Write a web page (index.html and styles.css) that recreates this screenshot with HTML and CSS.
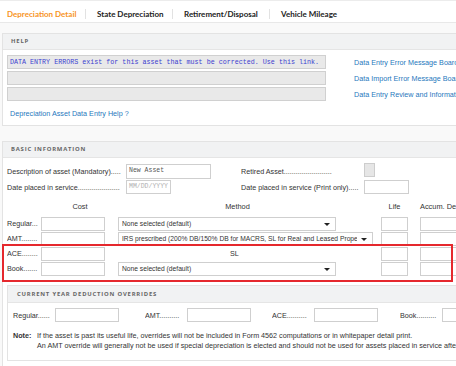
FILE: index.html
```html
<!DOCTYPE html>
<html>
<head>
<meta charset="utf-8">
<link rel="stylesheet" href="styles.css">
</head>
<body>
<nav class="tabs">
  <span class="tab t1 active">Depreciation Detail</span>
  <span class="sep"></span>
  <span class="tab t2">State Depreciation</span>
  <span class="sep"></span>
  <span class="tab t3">Retirement/Disposal</span>
  <span class="sep"></span>
  <span class="tab t4">Vehicle Mileage</span>
</nav>
<main class="page">
  <section class="panel help">
    <div class="panel-head">HELP</div>
    <div class="help-body">
      <div class="help-boxes">
        <div class="hbox err">DATA ENTRY ERRORS exist for this asset that must be corrected. Use this link.</div>
        <div class="hbox"></div>
        <div class="hbox"></div>
      </div>
      <div class="help-links">
        <a class="link">Data Entry Error Message Board</a>
        <a class="link">Data Import Error Message Board</a>
        <a class="link">Data Entry Review and Information</a>
      </div>
    </div>
    <a class="link help-main">Depreciation Asset Data Entry Help ?</a>
  </section>

  <section class="panel basic">
    <div class="panel-head">BASIC INFORMATION</div>
    <div class="basic-body">
      <div class="info-grid">
        <span class="lbl">Description of asset (Mandatory).....</span>
        <span class="cell"><span class="inp mono w-desc">New Asset</span></span>
        <span class="lbl">Retired Asset........................</span>
        <span class="cell"><span class="chk"></span></span>
        <span class="lbl">Date placed in service.....................</span>
        <span class="cell"><span class="inp mono ph w-date">MM/DD/YYYY</span></span>
        <span class="lbl">Date placed in service (Print only).....</span>
        <span class="cell"><span class="inp w-date"></span></span>
      </div>

      <div class="dep-grid">
        <span></span>
        <span class="th th-cost">Cost</span>
        <span></span>
        <span class="th th-method">Method</span>
        <span></span>
        <span class="th">Life</span>
        <span></span>
        <span class="th th-left">Accum. Depr.</span>

        <span class="lbl">Regular...</span>
        <span class="inp"></span>
        <span></span>
        <span class="sel w-sel"><span class="sel-t">None selected (default)</span><i class="arr"></i></span>
        <span></span>
        <span class="inp"></span>
        <span></span>
        <span class="inp"></span>

        <span class="lbl">AMT........</span>
        <span class="inp"></span>
        <span></span>
        <span class="sel w-sel-wide"><span class="sel-t">IRS prescribed (200% DB/150% DB for MACRS, SL for Real and Leased Property)</span><i class="arr"></i></span>
        <span></span>
        <span class="inp"></span>
        <span></span>
        <span class="inp"></span>

        <span class="lbl">ACE........</span>
        <span class="inp"></span>
        <span></span>
        <span class="plain">SL</span>
        <span></span>
        <span class="inp"></span>
        <span></span>
        <span class="inp"></span>

        <span class="lbl">Book.......</span>
        <span class="inp"></span>
        <span></span>
        <span class="sel w-sel"><span class="sel-t">None selected (default)</span><i class="arr"></i></span>
        <span></span>
        <span class="inp"></span>
        <span></span>
        <span class="inp"></span>
      </div>

      <section class="panel cyd">
        <div class="panel-head">CURRENT YEAR DEDUCTION OVERRIDES</div>
        <div class="cyd-body">
          <div class="cyd-row">
            <span class="cyd-item"><span class="lbl">Regular......</span><span class="inp"></span></span>
            <span class="cyd-item"><span class="lbl">AMT..........</span><span class="inp"></span></span>
            <span class="cyd-item"><span class="lbl">ACE..........</span><span class="inp"></span></span>
            <span class="cyd-item"><span class="lbl">Book..........</span><span class="inp"></span></span>
          </div>
          <div class="note">
            <b class="note-k">Note:</b>
            <div class="note-t">
              <div>If the asset is past its useful life, overrides will not be included in Form 4562 computations or in whitepaper detail print.</div>
              <div>An AMT override will generally not be used if special depreciation is elected and should not be used for assets placed in service after 1998.</div>
            </div>
          </div>
        </div>
      </section>
    </div>
    <div class="highlight"></div>
  </section>
</main>
</body>
</html>
```

FILE: styles.css
```css
* { box-sizing: border-box; }
html, body { margin: 0; padding: 0; }
body {
  width: 456px;
  height: 366px;
  overflow: hidden;
  background: #ffffff;
  font-family: "Liberation Sans", Arial, sans-serif;
  font-size: 7.2px;
  color: #333;
}

/* tabs */
.tabs {
  display: flex;
  align-items: center;
  height: 23px;
  padding: 4px 0 0 7px;
  border-top: 1px solid #ececec;
  border-bottom: 1px solid #e8e8e8;
  font-family: Lato, "Liberation Sans", sans-serif;
  font-weight: 700;
  font-size: 8px;
  color: #222;
  white-space: nowrap;
}
.tab { flex: none; }
.t1 { width: 68px; }
.t2 { width: 65px; }
.t3 { width: 75px; }
.t4 { width: 56px; }
.tab.active { color: #f7941e; }
.sep {
  flex: none;
  width: 1px;
  height: 10px;
  background: #e2e2e2;
  margin: 0 11px 0 10px;
}

/* page */
.page {
  padding: 10px 0 0 2px;
  background: #f9f9f9;
}
.panel {
  background: #fff;
  border: 1px solid #e3e3e3;
  border-right: none;
}
.panel-head {
  height: 16px;
  line-height: 15px;
  padding-left: 8px;
  background: #f1f2f3;
  border-bottom: 1px solid #e5e5e5;
  font-family: "Open Sans", "Liberation Sans", sans-serif;
  font-weight: 700;
  font-size: 5.9px;
  letter-spacing: 0.8px;
  color: #666;
}

/* help */
.help { height: 93px; }
.help-body {
  display: flex;
  padding: 5px 0 0 4px;
}
.help-boxes {
  display: flex;
  flex-direction: column;
  flex: none;
  gap: 2px;
  width: 319px;
}
.hbox {
  height: 14px;
  background: #e9e9e9;
  border: 1px solid #d0d0d0;
}
.hbox.err {
  padding-left: 2px;
  line-height: 12px;
  font-family: "Liberation Mono", monospace;
  font-size: 6.7px;
  color: #3c3fd0;
  white-space: nowrap;
  overflow: hidden;
}
.help-links {
  display: flex;
  flex-direction: column;
  flex: none;
  margin-left: 28px;
  white-space: nowrap;
}
.link {
  color: #1f78bd;
  line-height: 16px;
}
.help-main {
  display: block;
  margin: 5px 0 0 7px;
  line-height: 12px;
}

/* basic */
.basic {
  position: relative;
  margin-top: 15px;
  height: 240px;
}
.basic-body { padding: 5px 0 0 4px; }
.info-grid {
  display: grid;
  grid-template-columns: 119px 115px 123px 1fr;
  grid-auto-rows: 16px;
  align-items: center;
}
.info-grid .lbl { overflow: hidden; white-space: nowrap; }
.cell { display: flex; align-items: center; }
.inp {
  display: block;
  height: 14px;
  background: #fff;
  border: 1px solid #cfcfcf;
}
.mono {
  padding-left: 2px;
  line-height: 12px;
  font-family: "Liberation Mono", monospace;
  font-size: 6.5px;
  color: #555;
  white-space: nowrap;
  overflow: hidden;
}
.ph { color: #b0b0b0; font-size: 6.5px; }
.w-desc { width: 85px; height: 15px; }
.w-date { width: 45px; }
.chk {
  display: block;
  width: 11px;
  height: 14px;
  background: #e6e6e6;
  border: 1px solid #cdcdcd;
  margin-top: -2px;
}

.dep-grid {
  display: grid;
  grid-template-columns: 34px 64px 13px 255px 8px 27px 12px 60px;
  grid-template-rows: 20px repeat(4, 15px);
  align-items: center;
  margin-top: 1px;
  white-space: nowrap;
}
.dep-grid .lbl { overflow: hidden; }
.th { text-align: center; font-size: 7.4px; }
.th-cost { padding-left: 14px; }
.th-method { padding-right: 16px; }
.th-left { text-align: left; }
.sel {
  position: relative;
  display: block;
  height: 14px;
  line-height: 12px;
  padding-left: 3px;
  border: 1px solid #cfcfcf;
  background: #fff;
  font-size: 6.7px;
}
.sel-t {
  display: block;
  overflow: hidden;
  white-space: nowrap;
}
.w-sel { width: 218px; }
.w-sel-wide { width: 255px; }
.w-sel-wide .sel-t { width: 235px; }
.arr {
  position: absolute;
  right: 5px;
  top: 5px;
  width: 0;
  height: 0;
  border-left: 3px solid transparent;
  border-right: 3px solid transparent;
  border-top: 3px solid #222;
}
.plain { padding-left: 112px; }

/* cyd */
.cyd {
  margin: 9px 0 0 0;
  height: 76px;
}
.cyd .panel-head {
  height: 17px;
  line-height: 16px;
  padding-left: 9px;
}
.cyd-body { padding: 5px 0 0 5px; }
.cyd-row {
  display: grid;
  grid-template-columns: 132px 127px 128px 1fr;
  white-space: nowrap;
}
.cyd-item { display: flex; align-items: center; }
.cyd-item .lbl { width: 42px; flex: none; overflow: hidden; }
.cyd-item .inp { width: 64px; flex: none; }
.note {
  display: flex;
  margin-top: 9px;
  white-space: nowrap;
  line-height: 10px;
  font-size: 7.2px;
}
.note-k { width: 24px; flex: none; }

.highlight {
  position: absolute;
  left: -1px;
  top: 102px;
  width: 451px;
  height: 38px;
  border: 2px solid #e5282d;
}
```
